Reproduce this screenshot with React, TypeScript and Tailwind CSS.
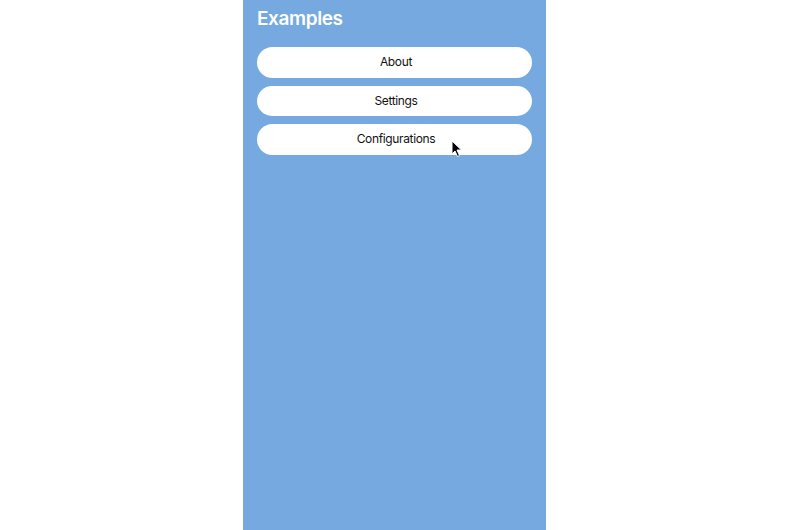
import React from 'react';

const items = ['About', 'Settings', 'Configurations'];

export default function App() {
  return (
    <div className="relative flex h-[530px] w-[800px] justify-center bg-white font-['Inter','Noto_Sans',sans-serif]">
      <div className="ml-[-11px] flex h-full w-[303px] flex-col bg-[#75a9e0] px-[14px]">
        <h1 className="mt-[7px] text-[19px] font-semibold leading-[24px] tracking-[-0.4px] text-white">Examples</h1>
        <div className="mt-[16px] flex flex-col gap-[8px]">
          {items.map((label) => (
            <button
              key={label}
              className="h-[30.5px] w-full rounded-full bg-white pl-[3px] text-[12px] tracking-[-0.35px] text-[#111]"
            >
              {label}
            </button>
          ))}
        </div>
      </div>

      {/* mouse pointer */}
      <svg className="absolute left-[451px] top-[140px]" width="12" height="18" viewBox="0 0 12 18">
        <path d="M1 1 L1 14 L4 11 L6.5 16.5 L8.5 15.5 L6 10 L10.5 10 Z" fill="#000" stroke="#fff" strokeWidth="1" />
      </svg>
    </div>
  );
}
